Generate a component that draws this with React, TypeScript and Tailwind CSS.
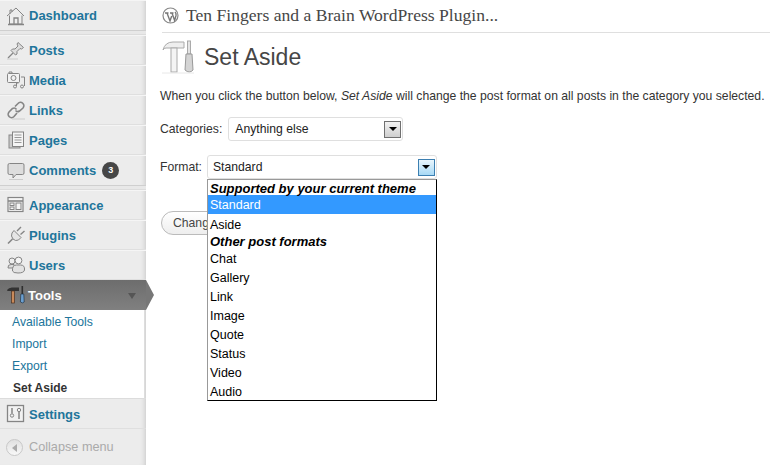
import React from "react";

const stroke = "#858585";

const Icon = ({ children }: { children: React.ReactNode }) => (
  <svg width="20" height="20" viewBox="0 0 20 20" fill="none" stroke={stroke} strokeWidth="1" className="shrink-0">
    {children}
  </svg>
);

const Home = () => (
  <Icon>
    <path d="M1 10 L10 2 L18 10 M4 8 V4 H6 V6" />
    <path d="M3.5 9.5 V18 H16 V9.5" fill="#eee" />
    <path d="M8 18 V12 H12 V18 M2 18.5 H18" strokeWidth="1.3" />
  </Icon>
);
const Pin = () => (
  <Icon>
    <path d="M12 2.5 L17.5 7.5 L15.5 9 L14 8.5 L11 11.5 L11 14 L9.5 15 L5 10.5 L6.5 9 L9 9 L12 6 L11 4 Z" fill="#ddd" />
    <path d="M7 13 L2 18" strokeWidth="1.3" />
    <path d="M1 19 H12" stroke="#ccc" />
  </Icon>
);
const Media = () => (
  <Icon>
    <rect x="1.5" y="3.5" width="12" height="9" rx="1" fill="#f2f2f2" />
    <circle cx="7.5" cy="8" r="2.5" />
    <path d="M3 3 V2 H6 V3 M15 7 H18.5 V16" />
    <circle cx="9" cy="16.5" r="1.5" />
    <circle cx="16" cy="16.5" r="1.5" />
    <path d="M10.5 16 V13 H12.5" />
  </Icon>
);
const LinkI = () => (
  <Icon>
    <path d="M9 6.5 L12 3.5 A3 3 0 0 1 17 8 L13.5 11 A3 3 0 0 1 9.5 10.5" strokeWidth="1.6" />
    <path d="M11 13 L8 16.5 A3 3 0 0 1 3 12 L6.5 8.5 A3 3 0 0 1 10.5 9.5" strokeWidth="1.6" />
    <path d="M6 19 H19" stroke="#ccc" />
  </Icon>
);
const Pages = () => (
  <Icon>
    <rect x="3" y="5" width="11" height="13" fill="#ccc" stroke="#888" />
    <rect x="6.5" y="2" width="11" height="14.5" fill="#f5f5f5" />
    <path d="M8.5 5 H15.5 M8.5 7.5 H15.5 M8.5 10 H15.5 M8.5 12.5 H15.5" stroke="#999" />
  </Icon>
);
const Comment = () => (
  <Icon>
    <path d="M3.5 2.5 H16.5 Q18 2.5 18 4 V12 Q18 13.5 16.5 13.5 H10 L7 17 V13.5 H3.5 Q2 13.5 2 12 V4 Q2 2.5 3.5 2.5 Z" fill="#ddd" />
    <path d="M3 18.5 H17" stroke="#ccc" />
  </Icon>
);
const Appearance = () => (
  <Icon>
    <rect x="2" y="2.5" width="15" height="14" fill="#f5f5f5" strokeWidth="1.2" />
    <path d="M2 6 H17" strokeWidth="1.6" />
    <rect x="4" y="8" width="4" height="2.5" />
    <rect x="4" y="12" width="4" height="2.5" />
    <rect x="10" y="8" width="5" height="6.5" />
  </Icon>
);
const Plug = () => (
  <Icon>
    <path d="M8 5.5 L15 12.5 L12.5 15 Q9.5 16.5 7 14 Q4.5 11 6 8 Z" fill="#e6e6e6" />
    <path d="M11 6 L15 2 M14.5 9.5 L18.5 6" strokeWidth="1.4" />
    <path d="M6.5 14 L2 18.5" strokeWidth="1.6" />
  </Icon>
);
const Users = () => (
  <Icon>
    <circle cx="6" cy="6" r="3" fill="#eee" />
    <path d="M2 13 Q1.5 9.5 5 9.5 H8 V13 Z" fill="#ddd" />
    <circle cx="12.5" cy="5.5" r="3.4" fill="#f4f4f4" />
    <path d="M6.5 16 Q6 10 10.5 10 H14.5 Q19 10 18.5 15 Q18 18 12 18 Q7 18 6.5 16 Z" fill="#e2e2e2" />
  </Icon>
);
const ToolsDark = () => (
  <svg width="20" height="20" viewBox="0 0 20 20" className="shrink-0">
    <path d="M1 5 Q3 2 7 2.5 H13 V6 H1.5 Z" fill="#333" />
    <rect x="5.5" y="6" width="3" height="12" fill="#c98a5a" stroke="#4a3020" strokeWidth="0.7" />
    <rect x="15.5" y="1" width="1.6" height="8" fill="#2f2f2f" />
    <path d="M14.8 9 H17.8 L18.2 17 Q16.5 18.8 14.4 17 Z" fill="#6b9fd0" stroke="#234" strokeWidth="0.7" />
  </svg>
);
const Settings = () => (
  <Icon>
    <rect x="1.5" y="1.5" width="16" height="16" fill="#f2f2f2" strokeWidth="1.3" />
    <circle cx="6" cy="11.5" r="1.7" />
    <path d="M6 4 V9.5" strokeWidth="1.5" />
    <circle cx="13" cy="6" r="1.7" />
    <path d="M13 8 V15" strokeWidth="1.5" />
  </Icon>
);

const Row = ({ icon, label, extra, last }: { icon: React.ReactNode; label: string; extra?: React.ReactNode; last?: boolean }) => (
  <div className={`flex h-[30px] items-center pl-[6px] border-t border-t-[#f5f5f5] ${last ? "" : "border-b border-b-[#dfdfdf]"}`}>
    <div className="w-[23px] flex items-center">{icon}</div>
    <span className="text-[13px] font-bold text-[#21759b] leading-none">{label}</span>
    {extra}
  </div>
);

const Sep = () => <div className="h-[5px] bg-[#e8e8e8] border-t border-t-[#cfcfcf] border-b border-b-[#dcdcdc]" />;

const Sub = ({ label, current }: { label: string; current?: boolean }) => (
  <div className={`h-[22px] flex items-center pt-[2px] ${current ? "pl-[13px] text-[12px] font-bold text-[#333]" : "pl-[12px] text-[12.2px] text-[#21759b]"}`}>{label}</div>
);

const Arrow = ({ active }: { active?: boolean }) => (
  <div className={`w-[17px] h-[17px] flex items-center justify-center border ${active ? "border-[#3c7fb1] bg-gradient-to-b from-[#eaf6fd] to-[#a7d9f5]" : "border-[#707070] bg-gradient-to-b from-[#f2f2f2] to-[#cfcfcf]"}`}>
    <div className="w-0 h-0 border-x-[4px] border-x-transparent border-t-[4px] border-t-black" />
  </div>
);

const Opt = ({ label, on, pad = "" }: { label: string; on?: boolean; pad?: string }) => (
  <div className={`h-[19px] flex items-center pl-[2px] text-[12.5px] leading-none ${pad} ${on ? "bg-[#3399ff] text-white" : "text-black"}`}>{label}</div>
);
const Group = ({ label, cls }: { label: string; cls: string }) => (
  <div className={`${cls} flex items-center pl-[2px] text-[13px] leading-none font-bold italic text-black`}>{label}</div>
);

export default function App() {
  return (
    <div className="flex w-[770px] h-[465px] overflow-hidden bg-white font-['Liberation_Sans',Arial,sans-serif]">
      <aside className="relative w-[146px] shrink-0 h-full bg-[#ececec] shadow-[inset_-5px_0_5px_-4px_#c8c8c8] z-10">
        <Row icon={<Home />} label="Dashboard" last />
        <Sep />
        <Row icon={<Pin />} label="Posts" />
        <Row icon={<Media />} label="Media" />
        <Row icon={<LinkI />} label="Links" />
        <Row icon={<Pages />} label="Pages" />
        <Row
          icon={<Comment />}
          label="Comments"
          last
          extra={
            <span className="ml-[6px] w-[17px] h-[17px] rounded-full bg-[#464646] text-white text-[9px] font-bold flex items-center justify-center">3</span>
          }
        />
        <Sep />
        <Row icon={<Appearance />} label="Appearance" />
        <Row icon={<Plug />} label="Plugins" />
        <Row icon={<Users />} label="Users" />
        <div className="relative flex h-[30px] items-center pl-[6px] bg-gradient-to-b from-[#6d6d6d] to-[#808080] w-[146px]">
          <div className="w-[22px] flex items-center"><ToolsDark /></div>
          <span className="text-[13px] font-bold text-white leading-none">Tools</span>
          <div className="absolute left-[128px] top-[13px] w-0 h-0 border-x-[4px] border-x-transparent border-t-[6px] border-t-[#555]" />
          <div className="absolute left-[146px] top-0 w-0 h-0 border-y-[15px] border-y-transparent border-l-[8px] border-l-[#777]" />
        </div>
        <div className="bg-white h-[88px] mr-[1px] border-r border-r-[#ddd]">
          <Sub label="Available Tools" />
          <Sub label="Import" />
          <Sub label="Export" />
          <Sub label="Set Aside" current />
        </div>
        <div className="flex h-[31px] items-center pl-[6px] pt-[1px] border-t border-t-[#dcdcdc] border-b border-b-[#dfdfdf]">
          <div className="w-[23px] flex items-center"><Settings /></div>
          <span className="text-[13px] font-bold text-[#21759b] leading-none">Settings</span>
        </div>
        <div className="flex items-center pl-[6px] pt-[1px] h-[36px]">
          <div className="w-[17px] h-[17px] rounded-full bg-gradient-to-b from-[#e0e0e0] to-[#f8f8f8] border border-[#c8c8c8] flex items-center justify-center">
            <div className="w-0 h-0 mr-[1px] border-y-[4px] border-y-transparent border-r-[5px] border-r-[#aaa]" />
          </div>
          <span className="ml-[6px] text-[12.7px] text-[#aaa]">Collapse menu</span>
        </div>
      </aside>

      <main className="flex-1 min-w-0 pl-[14px]">
        <div className="ml-[2px] h-[33px] border-b border-b-[#dfdfdf] flex items-center pb-[2px]">
          <svg width="17" height="17" viewBox="0 0 17 17" className="shrink-0">
            <circle cx="8.5" cy="8.5" r="7.5" fill="none" stroke="#888" strokeWidth="1.2" />
            <path d="M3 6 H6.5 M5 6 L8 14 L9.7 9 M8 6 H11.5 M10 6 L12.6 13.5 L14 8.5 Q14.5 6.5 13 5" fill="none" stroke="#777" strokeWidth="1.4" />
          </svg>
          <span className="ml-[7px] text-[17.6px] text-[#464646] font-['Liberation_Serif',serif] whitespace-nowrap">Ten Fingers and a Brain WordPress Plugin...</span>
        </div>

        <div className="flex items-center h-[48px] ml-[2px]">
          <svg width="32" height="34" viewBox="0 0 32 34" className="shrink-0">
            <path d="M1 10 Q3 2 11 2 H22 V8 H4 Q2 8 1 10 Z" fill="#eee" stroke="#aaa" />
            <rect x="9" y="8" width="6" height="24" fill="#f4f4f4" stroke="#aaa" />
            <rect x="25.5" y="1" width="3" height="13" fill="#e4e4e4" stroke="#aaa" />
            <path d="M24 14 H30 L31 30 Q27.5 34 23 30 Z" fill="#d4d4d4" stroke="#999" />
            <path d="M0 33 H32" stroke="#e8e8e8" />
          </svg>
          <h1 className="ml-[10px] text-[23px] text-[#464646] leading-none font-normal">Set Aside</h1>
        </div>

        <p className="mt-[9px] text-[12.2px] text-[#333] leading-none whitespace-nowrap">
          When you click the button below, <em>Set Aside</em> will change the post format on all posts in the category you selected.
        </p>

        <div className="mt-[15px] flex items-center h-[24px] text-[12.2px] text-[#333]">
          <span>Categories:</span>
          <div className="ml-[6px] w-[175px] h-[24px] border border-[#dfdfdf] rounded-[3px] flex items-center justify-between pl-[6px] pr-[1px] bg-white">
            <span className="text-[#222]">Anything else</span>
            <Arrow />
          </div>
        </div>

        <div className="relative mt-[14px] flex items-center h-[24px] text-[12.2px] text-[#333]">
          <span>Format:</span>
          <div className="ml-[5px] w-[230px] h-[24px] border border-[#dfdfdf] rounded-[3px] flex items-center justify-between pl-[5px] pr-[1px] bg-white">
            <span className="text-[#222]">Standard</span>
            <Arrow active />
          </div>
          <div className="absolute left-[47px] top-[24px] w-[230px] h-[222px] bg-white border border-black border-l-[#999] border-t-[#999] z-20">
            <Group label="Supported by your current theme" cls="h-[15px] pt-[1px]" />
            <Opt label="Standard" on pad="pt-[1px]" />
            <Opt label="Aside" pad="pt-[3px]" />
            <Group label="Other post formats" cls="h-[17px]" />
            <Opt label="Chat" />
            <Opt label="Gallery" />
            <Opt label="Link" />
            <Opt label="Image" />
            <Opt label="Quote" />
            <Opt label="Status" />
            <Opt label="Video" />
            <Opt label="Audio" />
          </div>
        </div>

        <div className="mt-[32px] ml-[1px] w-[90px] h-[24px] border border-[#bbb] rounded-[12px] bg-gradient-to-b from-white to-[#eee] flex items-center pl-[11px] text-[12.2px] text-[#464646]">
          Change
        </div>
      </main>
    </div>
  );
}
